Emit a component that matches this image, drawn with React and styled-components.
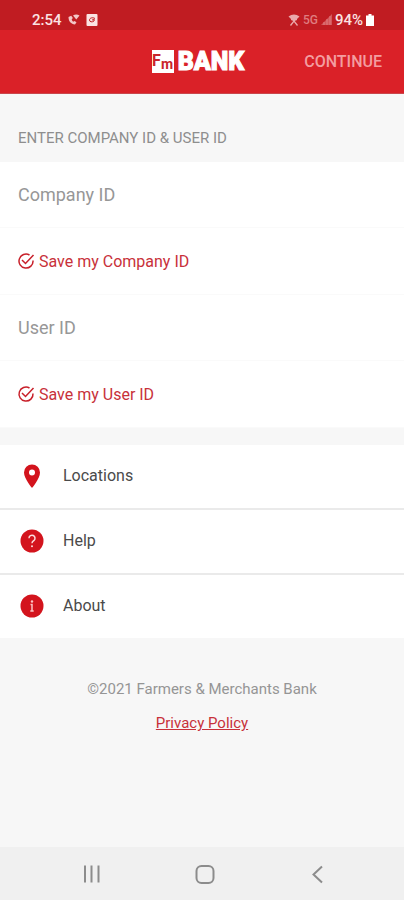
import { useState } from 'react';
import styled, { createGlobalStyle } from 'styled-components';

const GlobalStyle = createGlobalStyle`
  *, *::before, *::after {
    box-sizing: border-box;
  }
  body {
    margin: 0;
    background: #f7f7f7;
    font-family: Roboto, 'Liberation Sans', sans-serif;
    font-size: 16px;
    color: #4a4a4a;
  }
  button, input {
    font: inherit;
  }
`;

const Page = styled.div`
  display: flex;
  flex-direction: column;
  min-height: 100vh;
`;

const StatusBar = styled.div`
  display: flex;
  align-items: center;
  justify-content: space-between;
  height: 30px;
  padding: 9px 30px 0 32px;
  background: #c01c22;
  color: #fbe3e3;
  font-size: 15px;
  font-weight: 500;
`;

const StatusGroup = styled.div`
  display: flex;
  align-items: center;
  gap: ${(props) => props.$gap}px;
`;

const NetworkLabel = styled.span`
  color: #df7d80;
  font-size: 12px;
`;

const Header = styled.header`
  display: grid;
  grid-template-columns: 1fr auto 1fr;
  align-items: center;
  height: 64px;
  padding: 0 22px 0 14px;
  background: #da2128;
  border-bottom: 1px solid #c9474c;
`;

const Logo = styled.div`
  display: flex;
  grid-column: 2;
  align-items: center;
  gap: 4px;
`;

const LogoWord = styled.span`
  color: #fff;
  font-size: 25px;
  font-weight: 900;
  line-height: 24px;
  -webkit-text-stroke: 1px #fff;
`;

const ContinueButton = styled.button`
  justify-self: end;
  padding: 0;
  border: 0;
  background: none;
  color: #f39da0;
  font-weight: 500;
  cursor: pointer;
`;

const Main = styled.main`
  flex: 1;
`;

const SectionTitle = styled.h1`
  margin: 0;
  padding: 36px 18px 16px;
  color: #8e8e8e;
  font-size: 15px;
  font-weight: 400;
  line-height: 16px;
`;

const FieldList = styled.div`
  background: #fff;
`;

const TextField = styled.input`
  display: block;
  width: 100%;
  height: 66px;
  padding: 0 18px;
  border: 0;
  border-bottom: 1px solid #fafafa;
  border-radius: 0;
  background: none;
  color: #4a4a4a;
  font-size: 18px;
  outline: none;

  &::placeholder {
    color: #979797;
    opacity: 1;
  }
`;

const SaveLabel = styled.label`
  display: flex;
  align-items: center;
  gap: 4px;
  height: 67px;
  padding: 0 17px;
  border-bottom: 1px solid #fafafa;
  color: #c8313a;
  cursor: pointer;
`;

const SaveCheckbox = styled.input`
  position: absolute;
  width: 1px;
  height: 1px;
  margin: 0;
  opacity: 0;
`;

const MenuList = styled.nav`
  display: flex;
  flex-direction: column;
  gap: 2px;
  margin-top: 17px;
  background: #eaeaea;
`;

const MenuLink = styled.a`
  display: flex;
  align-items: center;
  gap: 19px;
  height: 63px;
  padding: 0 20px 1px;
  background: #fff;
  color: #4a4a4a;
  text-decoration: none;
`;

const MenuLabel = styled.span`
  padding-bottom: 2px;
  font-size: 16px;
`;

const Footer = styled.footer`
  display: flex;
  flex-direction: column;
  align-items: center;
  gap: 18px;
  padding-top: 43px;
  color: #959595;
  font-size: 15px;
  line-height: 16px;
`;

const PrivacyLink = styled.a`
  color: #c8313a;
  text-decoration: underline;
`;

const SystemBar = styled.div`
  display: flex;
  align-items: center;
  justify-content: space-between;
  height: 53px;
  padding: 0 74px 0 80px;
  background: #f0f0f0;
`;

const SystemButton = styled.button`
  display: flex;
  padding: 0;
  border: 0;
  background: none;
  color: #8c8c8c;
  cursor: pointer;
`;

const WifiCallIcon = () => (
  <svg width="12" height="12" viewBox="0 0 12 12" fill="none" stroke="#f3c6c7">
    <path d="M.5 3c0 4.500 2.500 7 6.500 7.500l1.500-2.200-2-1.400-1.400.8C4.300 7 3.800 6 3.700 5.200l1.200-1.200L3.200 1.800z" fill="#f3c6c7" stroke="none" />
    <path d="M5 1.500C7 .3 9.500.3 11.500 1.500L8.300 5.500z" fill="#f3c6c7" stroke="none" />
  </svg>
);

const AppIcon = () => (
  <svg width="12" height="12" viewBox="0 0 12 12" fill="none">
    <rect x=".5" y="0" width="11" height="12" rx="1" fill="#fbe3e3" />
    <path d="M9 4.500C6.500 3 3.500 4 3.500 6s2.500 2.500 4.500 1L8.300 5.500 6 6" stroke="#c01c22" />
  </svg>
);

const WifiIcon = () => (
  <svg width="12" height="12" viewBox="0 0 12 12" fill="none" stroke="#eaa9ab">
    <path d="M.5 2.500C4-.3 8-.3 11.500 2.500L6 8z" fill="#eaa9ab" stroke="none" />
    <path d="M2.500 11.500 6 7l3.500 4.500M3 5.500h6" strokeWidth="1.300" />
  </svg>
);

const SignalIcon = () => (
  <svg width="11" height="11" viewBox="0 0 11 11">
    <path d="M0 11 11 0v11z" fill="#d3575b" />
    <path d="M3 8v3M6 5v6M9 2v9" stroke="#df7d80" />
  </svg>
);

const BatteryIcon = () => (
  <svg width="8" height="12" viewBox="0 0 8 12">
    <path d="M2.500 0h3v1.500H8V12H0V1.500h2.500z" fill="#fff" />
  </svg>
);

const LogoMark = () => (
  <svg
    width="22"
    height="23"
    viewBox="0 0 22 23"
    overflow="visible"
    fontFamily="Roboto, sans-serif"
    fontWeight="700"
    fill="#c9252b"
  >
    <rect width="22" height="23" fill="#fff" />
    <text x="0" y="16" fontSize="16">F</text>
    <text x="9" y="19" fontSize="14">m</text>
  </svg>
);

const CheckIcon = ({ checked }) => (
  <svg width="18" height="18" viewBox="0 0 18 18" fill="none" stroke="#c8202a" strokeWidth="1.500">
    <path d="M12.500 3A7 7 0 1 0 16 8.500" />
    {checked ? <path d="M5 8l3.500 3.500L16.500 3" /> : <path d="M12.500 3A7 7 0 0 1 16 8.500" />}
  </svg>
);

const PinIcon = () => (
  <svg width="24" height="24" viewBox="0 0 24 24">
    <path
      d="M12 .5a8 8 0 0 0-8 8C4 14.500 12 24 12 24s8-9.500 8-15.500a8 8 0 0 0-8-8zm0 5a3 3 0 1 1 0 6 3 3 0 0 1 0-6z"
      fill="#d3141d"
    />
  </svg>
);

const HelpIcon = () => (
  <svg width="24" height="24" viewBox="0 0 24 24" fill="none">
    <circle cx="12" cy="12" r="11.500" fill="#d3141d" />
    <path d="M9 9.200a3 3 0 1 1 4.800 2.400c-1.200.9-1.800 1.300-1.800 2.700" stroke="#fbdcdc" strokeWidth="1.500" />
    <circle cx="12" cy="17.200" r="1" fill="#fbdcdc" />
  </svg>
);

const InfoIcon = () => (
  <svg width="24" height="24" viewBox="0 0 24 24" fill="none">
    <circle cx="12" cy="12" r="11.500" fill="#d3141d" />
    <path d="M10.500 10.500H12V17M10.300 17h3.400" stroke="#fbc4c5" strokeWidth="1.500" />
    <circle cx="12" cy="7.500" r="1.200" fill="#fbc4c5" />
  </svg>
);

const RecentsIcon = () => (
  <svg width="24" height="24" viewBox="0 0 24 24" stroke="currentColor" strokeWidth="2">
    <path d="M5 3.500v17M11.500 3.500v17M18.500 3.500v17" />
  </svg>
);

const HomeIcon = () => (
  <svg width="24" height="24" viewBox="0 0 24 24" fill="none" stroke="currentColor" strokeWidth="2">
    <rect x="3.500" y="4" width="17" height="17" rx="5" />
  </svg>
);

const BackIcon = () => (
  <svg width="24" height="24" viewBox="0 0 24 24" fill="none" stroke="currentColor" strokeWidth="2">
    <path d="M16 4.500 7.500 12.500l8.500 8" />
  </svg>
);

const MENU_ITEMS = [
  { label: 'Locations', href: '#locations', Icon: PinIcon },
  { label: 'Help', href: '#help', Icon: HelpIcon },
  { label: 'About', href: '#about', Icon: InfoIcon },
];

const SaveToggle = ({ children }) => {
  const [checked, setChecked] = useState(true);

  return (
    <SaveLabel>
      <SaveCheckbox
        type="checkbox"
        checked={checked}
        onChange={(event) => setChecked(event.target.checked)}
      />
      <CheckIcon checked={checked} />
      {children}
    </SaveLabel>
  );
};

const App = () => (
  <>
    <GlobalStyle />
    <Page>
      <StatusBar>
        <StatusGroup $gap={6}>
          <span>2:54</span>
          <WifiCallIcon />
          <AppIcon />
        </StatusGroup>
        <StatusGroup $gap={3}>
          <WifiIcon />
          <NetworkLabel>5G</NetworkLabel>
          <SignalIcon />
          <span>94%</span>
          <BatteryIcon />
        </StatusGroup>
      </StatusBar>
      <Header>
        <Logo>
          <LogoMark />
          <LogoWord>BANK</LogoWord>
        </Logo>
        <ContinueButton type="button">CONTINUE</ContinueButton>
      </Header>
      <Main>
        <SectionTitle>ENTER COMPANY ID &amp; USER ID</SectionTitle>
        <FieldList>
          <TextField type="text" placeholder="Company ID" aria-label="Company ID" />
          <SaveToggle>Save my Company ID</SaveToggle>
          <TextField type="text" placeholder="User ID" aria-label="User ID" />
          <SaveToggle>Save my User ID</SaveToggle>
        </FieldList>
        <MenuList>
          {MENU_ITEMS.map(({ label, href, Icon }) => (
            <MenuLink key={label} href={href}>
              <Icon />
              <MenuLabel>{label}</MenuLabel>
            </MenuLink>
          ))}
        </MenuList>
        <Footer>
          <span>©2021 Farmers &amp; Merchants Bank</span>
          <PrivacyLink href="#privacy">Privacy Policy</PrivacyLink>
        </Footer>
      </Main>
      <SystemBar>
        <SystemButton type="button" aria-label="Recent apps">
          <RecentsIcon />
        </SystemButton>
        <SystemButton type="button" aria-label="Home">
          <HomeIcon />
        </SystemButton>
        <SystemButton type="button" aria-label="Back">
          <BackIcon />
        </SystemButton>
      </SystemBar>
    </Page>
  </>
);

export default App;
